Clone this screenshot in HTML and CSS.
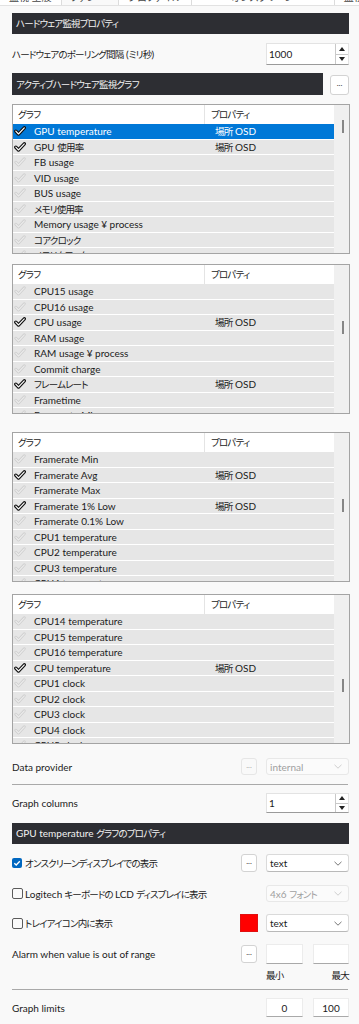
FILE: index.html
```html
<!DOCTYPE html>
<html lang="ja">
<head>
    <meta charset="UTF-8">
    <meta name="viewport" content="width=device-width, initial-scale=1.0">
    <title>ハードウェア監視プロパティ</title>
    <link rel="stylesheet" href="styles.css">
</head>
<body>
    <svg class="defs" width="0" height="0">
        <symbol id="on" viewBox="0 0 12 10">
            <path d="M1.8 5.2 4.5 8 10.3 1.8" fill="none" stroke="#111" stroke-width="3.4" stroke-linecap="round" stroke-linejoin="round"/>
            <path d="M1.8 5.2 4.5 8 10.3 1.8" fill="none" stroke="#fff" stroke-width="1.1" stroke-linecap="round" stroke-linejoin="round"/>
        </symbol>
        <symbol id="off" viewBox="0 0 12 10">
            <path d="M1.8 5.2 4.5 8 10.3 1.8" fill="none" stroke="#cfcfcf" stroke-width="2.8" stroke-linecap="round" stroke-linejoin="round"/>
            <path d="M1.8 5.2 4.5 8 10.3 1.8" fill="none" stroke="#ececec" stroke-width="1.1" stroke-linecap="round" stroke-linejoin="round"/>
        </symbol>
        <symbol id="chev" viewBox="0 0 8 5">
            <path d="M0.5 0.8 4 4.2 7.5 0.8" fill="none" stroke="currentColor" stroke-width="0.9"/>
        </symbol>
    </svg>

    <div class="tabs">
        <span class="tab">監視 全般</span>
        <span class="tab tab-open">ファン</span>
        <span class="tab">プロファイル</span>
        <span class="tab tab-wide">オンスクリーン</span>
        <span class="tab">監視設定</span>
    </div>

    <div class="head head-top"><span class="ja">ハードウェア監視プロパティ</span></div>

    <div class="field poll">
        <span class="label"><span class="ja">ハードウェアのポーリング間隔</span> (<span class="ja">ミリ秒</span>)</span>
        <div class="spin">
            <span class="spin-val">1000</span>
            <div class="spin-btns"><span class="up"></span><span class="down"></span></div>
        </div>
    </div>

    <div class="field active">
        <div class="head head-inline"><span class="ja">アクティブハードウェア監視グラフ</span></div>
        <button class="more">...</button>
    </div>

    <!-- graph list, four scroll positions -->
    <div class="list l1">
        <div class="list-body">
            <div class="list-head"><span class="col-name ja">グラフ</span><span class="col-prop ja">プロパティ</span></div>
            <div class="item sel"><svg class="chk"><use href="#on"/></svg><span class="name">GPU temperature</span><span class="prop"><span class="ja">場所</span> OSD</span></div>
            <div class="item"><svg class="chk"><use href="#on"/></svg><span class="name">GPU <span class="ja">使用率</span></span><span class="prop"><span class="ja">場所</span> OSD</span></div>
            <div class="item"><svg class="chk"><use href="#off"/></svg><span class="name">FB usage</span></div>
            <div class="item"><svg class="chk"><use href="#off"/></svg><span class="name">VID usage</span></div>
            <div class="item"><svg class="chk"><use href="#off"/></svg><span class="name">BUS usage</span></div>
            <div class="item"><svg class="chk"><use href="#off"/></svg><span class="name ja">メモリ使用率</span></div>
            <div class="item"><svg class="chk"><use href="#off"/></svg><span class="name">Memory usage ¥ process</span></div>
            <div class="item"><svg class="chk"><use href="#off"/></svg><span class="name ja">コアクロック</span></div>
            <div class="item"><svg class="chk"><use href="#off"/></svg><span class="name ja">メモリクロック</span></div>
        </div>
        <div class="scroll"><div class="thumb t1"></div></div>
    </div>

    <div class="list l2">
        <div class="list-body">
            <div class="list-head"><span class="col-name ja">グラフ</span><span class="col-prop ja">プロパティ</span></div>
            <div class="item"><svg class="chk"><use href="#off"/></svg><span class="name">CPU15 usage</span></div>
            <div class="item"><svg class="chk"><use href="#off"/></svg><span class="name">CPU16 usage</span></div>
            <div class="item"><svg class="chk"><use href="#on"/></svg><span class="name">CPU usage</span><span class="prop"><span class="ja">場所</span> OSD</span></div>
            <div class="item"><svg class="chk"><use href="#off"/></svg><span class="name">RAM usage</span></div>
            <div class="item"><svg class="chk"><use href="#off"/></svg><span class="name">RAM usage ¥ process</span></div>
            <div class="item"><svg class="chk"><use href="#off"/></svg><span class="name">Commit charge</span></div>
            <div class="item"><svg class="chk"><use href="#on"/></svg><span class="name ja">フレームレート</span><span class="prop"><span class="ja">場所</span> OSD</span></div>
            <div class="item"><svg class="chk"><use href="#off"/></svg><span class="name">Frametime</span></div>
            <div class="item"><svg class="chk"><use href="#off"/></svg><span class="name">Framerate Min</span></div>
        </div>
        <div class="scroll"><div class="thumb t2"></div></div>
    </div>

    <div class="list l3">
        <div class="list-body">
            <div class="list-head"><span class="col-name ja">グラフ</span><span class="col-prop ja">プロパティ</span></div>
            <div class="item"><svg class="chk"><use href="#off"/></svg><span class="name">Framerate Min</span></div>
            <div class="item"><svg class="chk"><use href="#on"/></svg><span class="name">Framerate Avg</span><span class="prop"><span class="ja">場所</span> OSD</span></div>
            <div class="item"><svg class="chk"><use href="#off"/></svg><span class="name">Framerate Max</span></div>
            <div class="item"><svg class="chk"><use href="#on"/></svg><span class="name">Framerate 1% Low</span><span class="prop"><span class="ja">場所</span> OSD</span></div>
            <div class="item"><svg class="chk"><use href="#off"/></svg><span class="name">Framerate 0.1% Low</span></div>
            <div class="item"><svg class="chk"><use href="#off"/></svg><span class="name">CPU1 temperature</span></div>
            <div class="item"><svg class="chk"><use href="#off"/></svg><span class="name">CPU2 temperature</span></div>
            <div class="item"><svg class="chk"><use href="#off"/></svg><span class="name">CPU3 temperature</span></div>
            <div class="item"><svg class="chk"><use href="#off"/></svg><span class="name">CPU4 temperature</span></div>
        </div>
        <div class="scroll"><div class="thumb t3"></div></div>
    </div>

    <div class="list l4">
        <div class="list-body">
            <div class="list-head"><span class="col-name ja">グラフ</span><span class="col-prop ja">プロパティ</span></div>
            <div class="item"><svg class="chk"><use href="#off"/></svg><span class="name">CPU14 temperature</span></div>
            <div class="item"><svg class="chk"><use href="#off"/></svg><span class="name">CPU15 temperature</span></div>
            <div class="item"><svg class="chk"><use href="#off"/></svg><span class="name">CPU16 temperature</span></div>
            <div class="item"><svg class="chk"><use href="#on"/></svg><span class="name">CPU temperature</span><span class="prop"><span class="ja">場所</span> OSD</span></div>
            <div class="item"><svg class="chk"><use href="#off"/></svg><span class="name">CPU1 clock</span></div>
            <div class="item"><svg class="chk"><use href="#off"/></svg><span class="name">CPU2 clock</span></div>
            <div class="item"><svg class="chk"><use href="#off"/></svg><span class="name">CPU3 clock</span></div>
            <div class="item"><svg class="chk"><use href="#off"/></svg><span class="name">CPU4 clock</span></div>
            <div class="item"><svg class="chk"><use href="#off"/></svg><span class="name">CPU5 clock</span></div>
        </div>
        <div class="scroll"><div class="thumb t4"></div></div>
    </div>

    <div class="field provider">
        <span class="label">Data provider</span>
        <div class="ctrls">
            <button class="more off">...</button>
            <div class="combo off"><span>internal</span><svg class="chev"><use href="#chev"/></svg></div>
        </div>
    </div>

    <div class="rule rule-a"></div>

    <div class="field cols">
        <span class="label">Graph columns</span>
        <div class="spin">
            <span class="spin-val">1</span>
            <div class="spin-btns"><span class="up"></span><span class="down"></span></div>
        </div>
    </div>

    <div class="head head-gpu">GPU temperature <span class="ja">グラフのプロパティ</span></div>

    <div class="field osd">
        <label class="check"><span class="box on"><svg viewBox="0 0 10 10"><path d="M2.3 5.2 4.2 7 7.8 3.2" fill="none" stroke="#fff" stroke-width="1.3"/></svg></span><span class="ja">オンスクリーンディスプレイでの表示</span></label>
        <div class="ctrls">
            <button class="more">...</button>
            <div class="combo"><span>text</span><svg class="chev"><use href="#chev"/></svg></div>
        </div>
    </div>

    <div class="field lcd">
        <label class="check"><span class="box"></span>Logitech <span class="ja">キーボードの</span> LCD <span class="ja">ディスプレイに表示</span></label>
        <div class="combo off"><span>4x6 <span class="ja">フォント</span></span><svg class="chev"><use href="#chev"/></svg></div>
    </div>

    <div class="field tray">
        <label class="check"><span class="box"></span><span class="ja">トレイアイコン内に表示</span></label>
        <div class="ctrls ctrls-swatch">
            <span class="swatch"></span>
            <div class="combo"><span>text</span><svg class="chev"><use href="#chev"/></svg></div>
        </div>
    </div>

    <div class="field alarm">
        <span class="label">Alarm when value is out of range</span>
        <div class="ctrls">
            <button class="more">...</button>
            <div class="pair"><span class="num"></span><span class="num"></span></div>
        </div>
    </div>

    <div class="minmax"><span class="ja">最小</span><span class="ja">最大</span></div>

    <div class="rule rule-b"></div>

    <div class="field limits">
        <span class="label">Graph limits</span>
        <div class="pair"><span class="num">0</span><span class="num">100</span></div>
    </div>
</body>
</html>
```

FILE: styles.css
```css
body {
    margin: 0;
    width: 359px;
    background-color: #f9f9f9;
    color: #1b1b1b;
    font-family: Lato, "Noto Sans CJK JP", sans-serif;
    font-size: 10px;
    font-feature-settings: "palt";
}
.defs {
    display: block;
    overflow: hidden;
}
/* Japanese runs: the original UI font is much narrower */
.ja {
    font-size: 9.5px;
    letter-spacing: -0.8px;
}

/* tab strip, only its bottom edge is visible */
.tabs {
    display: flex;
    height: 5px;
    overflow: hidden;
    background-color: #fff;
    border-bottom: 1px solid #e2e2e2;
}
.tab {
    padding: 0 9px;
    margin-top: -8px;
    line-height: 10px;
    color: #444;
    border-right: 1px solid #dcdcdc;
    white-space: nowrap;
}
.tab-open {
    background-color: #f9f9f9;
    padding-right: 22px;
}
.tab-wide {
    padding: 0 40px;
}

.head {
    height: 21px;
    line-height: 21px;
    padding-left: 4px;
    background-color: #2d2e33;
    color: #f2f2f2;
    white-space: nowrap;
}
.head-top {
    margin: 7px 10px 0 12px;
}
.head-gpu {
    margin: 10px 10px 0 12px;
}

.field {
    display: flex;
    align-items: center;
    margin: 0 10px 0 12px;
}
.label {
    flex: 1;
    white-space: nowrap;
}
.ctrls {
    display: flex;
    align-items: center;
    gap: 9px;
    height: 100%;
}
.ctrls-swatch {
    gap: 8px;
}

.poll { margin-top: 9px; height: 22px; }
.active { margin-top: 8px; height: 22px; align-items: flex-end; }
.provider { margin-top: 14px; height: 17px; }
.cols { margin-top: 8px; height: 20px; }
.osd { margin-top: 10px; height: 18px; }
.lcd { margin-top: 13px; height: 17px; }
.tray { margin-top: 12px; height: 18px; }
.alarm { margin-top: 12px; height: 20px; }
.limits { margin-top: 8px; height: 19px; }

.head-inline {
    flex: 1;
    height: 22px;
    line-height: 22px;
}
.more {
    width: 16px;
    height: 17px;
    padding: 0 0 4px;
    border: 1px solid #d3d3d3;
    border-radius: 3px;
    background-color: #fff;
    color: #333;
    font-family: inherit;
    font-size: 8px;
    line-height: 1;
}
.active .more {
    width: 19px;
    height: 20px;
    margin-left: 7px;
}
.osd .more, .alarm .more {
    height: 18px;
}
.more.off {
    background-color: #f9f9f9;
    border-color: #e6e6e6;
    color: #a8a8a8;
}

/* spin box */
.spin {
    display: flex;
    width: 83px;
    height: 100%;
    box-sizing: border-box;
    background-color: #fff;
    border: 1px solid #e3e3e3;
    border-bottom-color: #9a9a9a;
}
.spin-val {
    flex: 1;
    padding-left: 2px;
    align-self: center;
}
.spin-btns {
    display: flex;
    flex-direction: column;
    width: 12px;
    border-left: 1px solid #c9c9c9;
}
.spin-btns span {
    flex: 1;
    display: flex;
    align-items: center;
    justify-content: center;
}
.spin-btns .up {
    border-bottom: 1px solid #c9c9c9;
}
.up::after, .down::after {
    content: "";
    border-left: 3px solid transparent;
    border-right: 3px solid transparent;
}
.up::after {
    border-bottom: 4px solid #222;
}
.down::after {
    border-top: 4px solid #222;
}

/* graph list */
.list {
    display: flex;
    height: 150px;
    box-sizing: border-box;
    margin: 0 9px 0 12px;
    border: 1px solid #a4a4a4;
    background-color: #f0f0f0;
    overflow: hidden;
}
.l1 { margin-top: 9px; }
.l2 { margin-top: 10px; }
.l3 { margin-top: 18px; }
.l4 { margin-top: 12px; }
.list-body {
    width: 321px;
}
.list-head {
    display: flex;
    height: 19px;
    line-height: 19px;
    background-color: #fff;
}
.col-name {
    width: 192px;
    padding-left: 5px;
    box-sizing: border-box;
    border-right: 1px solid #e4e4e4;
}
.col-prop {
    padding-left: 6px;
}
.item {
    display: flex;
    align-items: center;
    height: 14.5px;
    border-bottom: 1px solid #fff;
    background-color: #e6e6e6;
    white-space: nowrap;
}
.item.sel {
    background-color: #0078d7;
    color: #fff;
}
.chk {
    width: 12px;
    height: 10px;
    margin: 0 8px 0 1px;
}
.name {
    width: 171px;
}
.prop {
    padding-left: 10px;
}
.scroll {
    width: 15px;
    background-color: #f0f0f0;
}
.thumb {
    width: 2px;
    height: 13px;
    margin-left: 8px;
    background-color: #868686;
}
.t1 { margin-top: 15px; }
.t2 { margin-top: 56px; }
.t3 { margin-top: 66px; }
.t4 { margin-top: 84px; }

/* combo box */
.combo {
    display: flex;
    align-items: center;
    justify-content: space-between;
    width: 83px;
    height: 100%;
    box-sizing: border-box;
    padding: 0 6px 0 3px;
    background-color: #fff;
    border: 1px solid #dadada;
    border-bottom-color: #b9b9b9;
    border-radius: 3px;
}
.combo.off {
    background-color: #fbfbfb;
    border-color: #e8e8e8;
    color: #a0a0a0;
}
.chev {
    width: 8px;
    height: 5px;
    color: #666;
}
.combo.off .chev {
    color: #cacaca;
}

.check {
    flex: 1;
    display: flex;
    align-items: center;
    gap: 2px;
    white-space: nowrap;
}
.box {
    width: 9px;
    height: 9px;
    border: 1px solid #5b5b5b;
    border-radius: 2px;
    background-color: #fafafa;
}
.box.on {
    width: 10px;
    height: 10px;
    margin-right: 1px;
    border: none;
    background-color: #0067c0;
}
.box svg {
    display: block;
    width: 10px;
    height: 10px;
}
.swatch {
    width: 18px;
    height: 18px;
    box-sizing: border-box;
    background-color: #ff0000;
    border: 1px solid #e01010;
}

.pair {
    display: flex;
    gap: 10px;
    height: 100%;
}
.num {
    width: 37px;
    box-sizing: border-box;
    display: flex;
    align-items: center;
    justify-content: center;
    background-color: #fff;
    border: 1px solid #ececec;
    border-bottom-color: #a9a9a9;
}
.num + .num {
    width: 36px;
}
.minmax {
    display: flex;
    justify-content: space-between;
    width: 83px;
    height: 14px;
    line-height: 14px;
    margin: 5px 0 0 266px;
}

.rule {
    height: 1px;
    margin: 0 11px 0 12px;
    background-color: #a9a9a9;
}
.rule-a { margin-top: 9px; }
.rule-b { margin-top: 6px; }
```
